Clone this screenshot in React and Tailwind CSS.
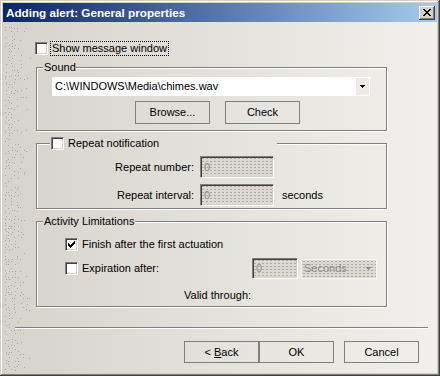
import React from "react";

const pageBg = "bg-fixed bg-[linear-gradient(to_right,#d6d3cb,#f1f0ec)]";
const sunken =
  "border border-t-[#808080] border-l-[#808080] border-r-white border-b-white shadow-[inset_1px_1px_0_#404040,inset_-1px_-1px_0_#d4d0c8]";
const dither =
  "bg-[#dcd9d2] bg-[radial-gradient(circle,#aeaba3_0.7px,transparent_0.8px)] bg-[length:4px_3px]";

// dotted texture on the left edge of the dialog body
const dots = (() => {
  let s = 11;
  const rnd = () => (s = (s * 16807) % 2147483647) / 2147483647;
  const out = [];
  for (let y = 5; y < 350; y += 3) {
    for (let x = 2; x < 32; x += 3) {
      const p = 0.7 - (x - 2) / 36;
      if (rnd() < p) out.push([x + Math.floor(rnd() * 2), y + Math.floor(rnd() * 2)]);
    }
  }
  return out;
})();

const checkPixels = [
  [6, 0, 1], [5, 1, 2], [0, 2, 1], [4, 2, 3], [0, 3, 2], [3, 3, 3], [0, 4, 5], [1, 5, 3], [2, 6, 1],
];

const closePixels = [
  [0, 0, 2], [6, 0, 2], [1, 1, 2], [5, 1, 2], [2, 2, 4], [3, 3, 2], [2, 4, 4], [1, 5, 2], [5, 5, 2], [0, 6, 2], [6, 6, 2],
];

const Checkbox = ({ checked }) => (
  <span className={"w-[13px] h-[13px] shrink-0 bg-white flex items-center justify-center " + sunken}>
    {checked && (
      <svg width="7" height="7" viewBox="0 0 7 7" shapeRendering="crispEdges">
        {checkPixels.map(([x, y, w], i) => (
          <rect key={i} x={x} y={y} width={w} height="1" fill="#000" />
        ))}
      </svg>
    )}
  </span>
);

const Button = ({ children, className = "" }) => (
  <button className={"w-[75px] flex items-center justify-center border border-[#7f7f7f] bg-transparent leading-none " + className}>
    {children}
  </button>
);

const Arrow = ({ color }) => (
  <svg width="5" height="3" viewBox="0 0 5 3" shapeRendering="crispEdges">
    <path d="M0 0h5v1H0zM1 1h3v1H1zM2 2h1v1H2z" fill={color} />
  </svg>
);

const GroupBox = ({ label, labelClass, className = "", children }) => (
  <div className={"ml-[33px] w-[351px] border border-[#808080] shadow-[inset_1px_1px_0_#fff,1px_1px_0_#fff] " + className}>
    <div className={"-mt-[7px] h-[13px] flex items-center " + pageBg + " " + labelClass}>{label}</div>
    {children}
  </div>
);

const DisabledField = ({ className }) => (
  <div className={"flex items-center pl-[3px] text-[#8c8982] " + sunken + " " + dither + " " + className}>0</div>
);

export default function App() {
  return (
    <div className="w-[440px] h-[376px] p-[3px] flex flex-col bg-[#d4d0c8] font-['Liberation_Sans',Arial,sans-serif] text-[11px] leading-[13px] text-black shadow-[inset_-1px_-1px_0_#404040,inset_1px_1px_0_#d4d0c8,inset_-2px_-2px_0_#808080,inset_2px_2px_0_#fff]">
      {/* title bar */}
      <div className="h-[19px] shrink-0 flex items-center pl-[3px] pr-[2px] bg-[linear-gradient(to_right,#0a246a,#a6caf0)]">
        <span className="text-white font-bold text-[11.7px] leading-none">Adding alert: General properties</span>
        <div className="ml-auto w-[16px] h-[14px] flex items-center justify-center bg-[#d4d0c8] shadow-[inset_-1px_-1px_0_#404040,inset_1px_1px_0_#fff,inset_-2px_-2px_0_#808080]">
          <svg width="8" height="7" viewBox="0 0 8 7" shapeRendering="crispEdges" className="-mt-[1px]">
            {closePixels.map(([x, y, w], i) => (
              <rect key={i} x={x} y={y} width={w} height="1" fill="#000" />
            ))}
          </svg>
        </div>
      </div>

      {/* body */}
      <div className={"relative flex-1 flex flex-col overflow-hidden pt-[19px] " + pageBg}>
        <svg className="absolute left-0 top-0 pointer-events-none" width="40" height="352" shapeRendering="crispEdges">
          {dots.map(([x, y], i) => (
            <rect key={i} x={x} y={y} width="1" height="1" fill="#a8a59d" />
          ))}
        </svg>

        <div className="relative ml-[32px] h-[15px] flex items-center">
          <Checkbox />
          <span className="ml-[2px] h-[15px] px-[1px] flex items-center border border-dotted border-black">Show message window</span>
        </div>

        <GroupBox label="Sound" labelClass="relative ml-[6px] w-[33px] pl-[1px]" className="relative mt-[11px] pb-[6px]">
          <div className="mt-[3px] ml-[15px] w-[318px] h-[19px] bg-white flex items-center">
            <span className="pl-[3px]">C:\WINDOWS\Media\chimes.wav</span>
            <span className="ml-auto mr-[1px] w-[13px] h-[17px] bg-[#ecebe6] flex items-center justify-center">
              <Arrow color="#000" />
            </span>
          </div>
          <div className="mt-[5px] ml-[98px] flex gap-[15px]">
            <Button className="h-[23px]">Browse...</Button>
            <Button className="h-[23px]">Check</Button>
          </div>
        </GroupBox>

        <GroupBox
          label={
            <>
              <Checkbox />
              <span className="ml-[4px]">Repeat notification</span>
            </>
          }
          labelClass="relative ml-[13px] w-[227px] pl-[1px]"
          className="relative mt-[12px] pb-[2px]"
        >
          <div className="mt-[6px] h-[22px] flex items-center">
            <span className="w-[157px] text-right">Repeat number:</span>
            <DisabledField className="ml-[6px] w-[74px] h-[22px]" />
          </div>
          <div className="mt-[6px] h-[22px] flex items-center">
            <span className="w-[157px] text-right">Repeat interval:</span>
            <DisabledField className="ml-[6px] w-[74px] h-[22px]" />
            <span className="ml-[8px]">seconds</span>
          </div>
        </GroupBox>

        <GroupBox
          label="Activity Limitations"
          labelClass="relative ml-[6px] w-[92px] pl-[1px]"
          className="relative mt-[12px] pb-[4px]"
        >
          <div className="mt-[10px] h-[13px] pl-[28px] flex items-center">
            <Checkbox checked />
            <span className="ml-[4px]">Finish after the first actuation</span>
          </div>
          <div className="mt-[7px] h-[21px] pl-[28px] flex items-center">
            <div className="w-[187px] flex items-center">
              <Checkbox />
              <span className="ml-[4px]">Expiration after:</span>
            </div>
            <DisabledField className="w-[46px] h-[21px]" />
            <div className={"ml-[3px] w-[76px] h-[20px] flex items-center pl-[2px] pr-[5px] border border-[#f6f5f2] text-[#8c8982] " + dither}>
              <span>Seconds</span>
              <span className="ml-auto">
                <Arrow color="#8c8982" />
              </span>
            </div>
          </div>
          <div className="mt-[10px] h-[13px] pl-[147px]">Valid through:</div>
        </GroupBox>

        <div className="relative mt-[20px] ml-[12px] w-[413px] h-[2px] border-t border-t-[#808080] border-b border-b-white" />

        <div className="relative mt-[12px] ml-[181px] flex">
          <Button className="h-[22px]">
            &lt;&nbsp;<span className="underline underline-offset-1">B</span>ack
          </Button>
          <Button className="h-[22px]">OK</Button>
          <Button className="h-[22px] ml-[10px]">Cancel</Button>
        </div>
      </div>
    </div>
  );
}
